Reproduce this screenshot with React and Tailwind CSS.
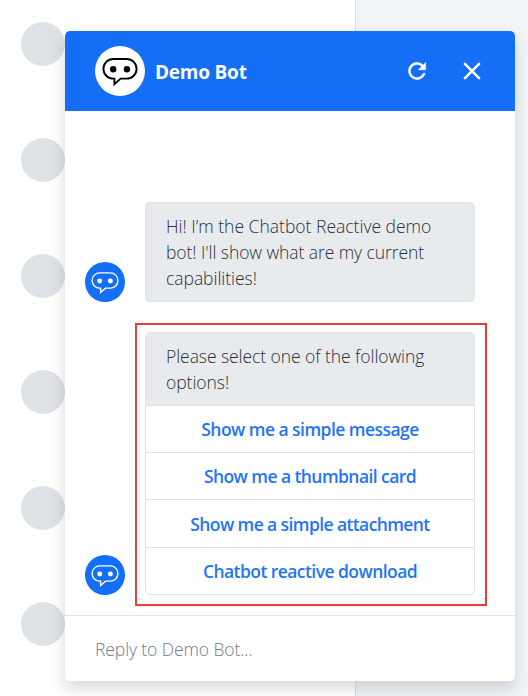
const contacts = [0, 1, 2, 3, 4, 5];

const options = [
  { label: 'Show me a simple message', row: 'h-[47px]', text: 'tracking-[-0.54px]' },
  { label: 'Show me a thumbnail card', row: 'h-[47px]', text: 'tracking-[-0.57px]' },
  { label: 'Show me a simple attachment', row: 'h-[48px]', text: 'tracking-[-0.6px]' },
  { label: 'Chatbot reactive download', row: 'h-[47px]', text: 'tracking-[-0.56px]' },
];

function BotIcon({ className, stroke = 1.9 }) {
  return (
    <svg viewBox="0 0 36 28" className={className} fill="none" stroke="currentColor" strokeWidth={stroke} strokeLinejoin="miter">
      <path d="M11.2 1H24.8A9.7 9.7 0 0 1 24.8 20.6H18.6L12.4 26.2V20.6H11.2A9.7 9.7 0 0 1 11.2 1Z" />
      <circle cx="11.2" cy="11.3" r="3.2" fill="currentColor" stroke="none" />
      <circle cx="24.9" cy="11.3" r="3.2" fill="currentColor" stroke="none" />
    </svg>
  );
}

function Avatar({ className = '' }) {
  return (
    <div className={`flex size-10 shrink-0 items-center justify-center rounded-full bg-[#146ef6] text-white ${className}`}>
      <BotIcon className="mt-[1px] h-[22px] w-[28px]" stroke={1.8} />
    </div>
  );
}

export default function App() {
  return (
    <div className="relative h-[696px] w-[528px] overflow-hidden bg-[#f1f5f9] font-['Open_Sans','Noto_Sans',sans-serif]">
      <aside className="flex h-full w-[356px] flex-col gap-[72px] border-r border-[#dce0e5] bg-white pt-[22.4px] pl-[21px]">
        {contacts.map((n) => (
          <div key={n} className="size-[44px] shrink-0 rounded-full bg-[#dee2e6]" />
        ))}
      </aside>

      <section className="absolute top-[31px] left-[65px] flex h-[650px] w-[450px] flex-col overflow-hidden rounded-[5px] bg-white shadow-[0_8px_16px_rgba(0,0,0,0.15)]">
        <header className="flex h-20 shrink-0 items-center bg-[#146ef6] pr-[30px] pl-[30px] text-white">
          <div className="flex size-[50px] items-center justify-center rounded-full bg-white text-black">
            <BotIcon className="mt-[2px] h-[28px] w-[36px]" />
          </div>
          <h1 className="ml-[10px] pt-[2px] text-[19px] font-bold tracking-[-0.22px]">Demo Bot</h1>
          <button className="mr-[29px] ml-auto" aria-label="Restart">
            <svg viewBox="0 0 24 24" className="size-[26px]" fill="currentColor" stroke="currentColor" strokeWidth="0.3">
              <path d="M17.65 6.35A7.96 7.96 0 0 0 12 4a8 8 0 1 0 7.73 10h-2.08A6 6 0 1 1 12 6c1.66 0 3.14.69 4.22 1.78L13 11h7V4l-2.35 2.35z" />
            </svg>
          </button>
          <button aria-label="Close" className="flex size-[26px] items-center justify-center">
            <svg viewBox="0 0 18 18" className="size-[18px]" fill="none" stroke="currentColor" strokeWidth="2.5">
              <path d="M1.2 1.2 16.8 16.8M16.8 1.2 1.2 16.8" />
            </svg>
          </button>
        </header>

        <main className="flex flex-1 flex-col justify-end pr-7 pb-[9px] pl-5 text-[#2b3036]">
          <div className="flex items-end">
            <Avatar />
            <div className="ml-5 h-[100px] w-[330px] rounded-[5px] border border-[#dee2e6] bg-[#e8ebee] px-5 pt-[10px] text-[17.5px] leading-[26px] font-light whitespace-nowrap">
              <p>Hi! I’m the Chatbot Reactive demo</p>
              <p className="tracking-[-0.07px]">bot! I'll show what are my current</p>
              <p className="tracking-[-0.04px]">capabilities!</p>
            </div>
          </div>

          <div className="mt-[21px] flex items-end">
            <Avatar className="mb-[11px]" />
            <div className="ml-[10px] h-[283px] w-[352px] border-2 border-[#f13b3b] pt-[7px] pr-[10px] pl-2">
              <div className="h-[263px] overflow-hidden rounded-[5px] border border-[#dee2e6]">
                <div className="h-[72px] bg-[#e8ebee] px-5 pt-[10px] text-[17.5px] leading-[26px] font-light whitespace-nowrap">
                  <p className="tracking-[-0.06px]">Please select one of the following</p>
                  <p className="tracking-[-0.04px]">options!</p>
                </div>
                {options.map((o) => (
                  <button key={o.label} className={`flex w-full items-center justify-center border-t border-[#dee2e6] pt-[1px] text-[17.5px] font-semibold whitespace-nowrap text-[#1f75f5] ${o.row}`}>
                    <span className={o.text}>{o.label}</span>
                  </button>
                ))}
              </div>
            </div>
          </div>
        </main>

        <footer className="flex h-[66px] shrink-0 items-center border-t border-[#dee2e6] pt-[2px] pl-[30px] text-[17.5px] font-light tracking-[-0.1px] text-[#747c84]">
          Reply to Demo Bot...
        </footer>
      </section>
    </div>
  );
}
